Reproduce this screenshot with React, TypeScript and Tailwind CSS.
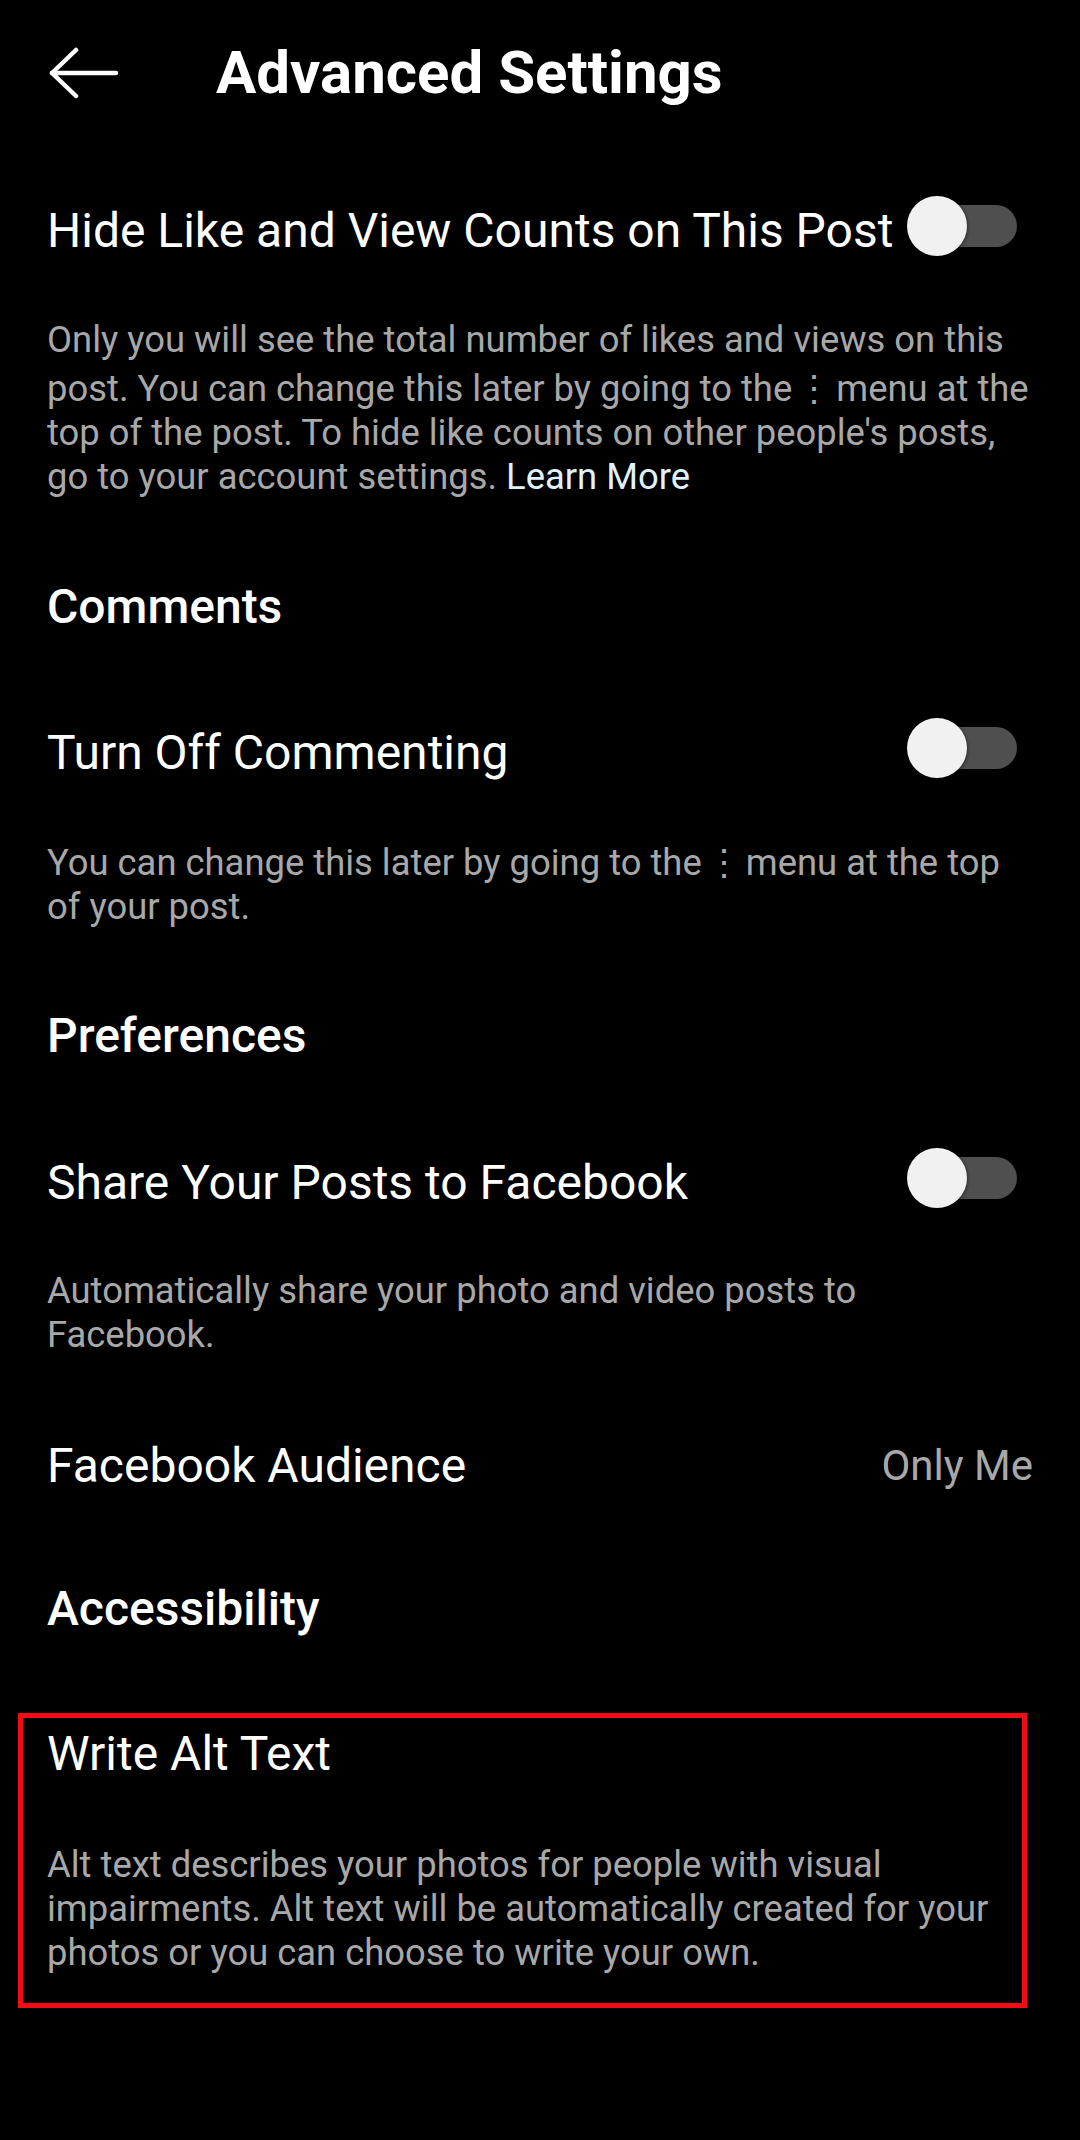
import React from "react";

const Toggle = () => (
  <div className="relative w-[110px] h-[60px] shrink-0 mr-[16px] -mt-[10px]">
    <div className="absolute right-0 top-[9px] h-[42px] w-[90px] rounded-full bg-[#4f4f4f]" />
    <div className="absolute left-0 top-0 h-[60px] w-[60px] rounded-full bg-[#f1f1f1] shadow-[0_1px_4px_rgba(0,0,0,0.6)]" />
  </div>
);

const Dots = () => (
  <span className="inline-flex justify-center w-[26px] pt-[5px] align-baseline">⋮</span>
);

export default function App() {
  return (
    <div className="w-[1080px] h-[2140px] bg-black overflow-hidden font-[Roboto,'Noto_Sans',sans-serif] text-white">
      {/* Header */}
      <div className="flex items-center h-[144px] pt-[2px]">
        <svg
          className="ml-[49px] shrink-0"
          width="70"
          height="56"
          viewBox="0 0 70 56"
          fill="none"
          stroke="white"
          strokeWidth="4.5"
          strokeLinecap="round"
          strokeLinejoin="round"
        >
          <path d="M3 28 H67" />
          <path d="M27 5 L3 28 L27 51" />
        </svg>
        <h1 className="ml-[97px] text-[60px] leading-[72px] font-bold">Advanced Settings</h1>
      </div>

      <div className="px-[47px]">
        {/* Hide like */}
        <div className="mt-[59px] h-[56px] flex items-center justify-between">
          <span className="text-[48px] leading-[56px] whitespace-nowrap">
            Hide Like and View Counts on This Post
          </span>
          <Toggle />
        </div>
        <p className="mt-[59px] text-[36.4px] leading-[44px] text-[#a8a8a8] whitespace-nowrap">
          Only you will see the total number of likes and views on this
          <br />
          post. You can change this later by going to the <Dots /> menu at the
          <br />
          top of the post. To hide like counts on other people's posts,
          <br />
          go to your account settings. <span className="text-[#e0f1ff]">Learn More</span>
        </p>

        {/* Comments */}
        <div className="mt-[80px] h-[56px] text-[48px] leading-[56px] font-medium">Comments</div>
        <div className="mt-[90px] h-[56px] flex items-center justify-between">
          <span className="text-[48px] leading-[56px] whitespace-nowrap">Turn Off Commenting</span>
          <Toggle />
        </div>
        <p className="mt-[55px] text-[36.4px] leading-[44px] text-[#a8a8a8] whitespace-nowrap">
          You can change this later by going to the <Dots /> menu at the top
          <br />
          of your post.
        </p>

        {/* Preferences */}
        <div className="mt-[79px] h-[56px] text-[48px] leading-[56px] font-medium">Preferences</div>
        <div className="mt-[91px] h-[56px] flex items-center justify-between">
          <span className="text-[48px] leading-[56px] whitespace-nowrap">Share Your Posts to Facebook</span>
          <Toggle />
        </div>
        <p className="mt-[58px] text-[36.4px] leading-[44px] text-[#a8a8a8] whitespace-nowrap">
          Automatically share your photo and video posts to
          <br />
          Facebook.
        </p>
        <div className="mt-[81px] h-[56px] flex items-center justify-between">
          <span className="text-[48px] leading-[56px] whitespace-nowrap">Facebook Audience</span>
          <span className="text-[42px] leading-[56px] text-[#a8a8a8]">Only Me</span>
        </div>

        {/* Accessibility */}
        <div className="mt-[87px] h-[56px] text-[48px] leading-[56px] font-medium">Accessibility</div>
        <div className="mt-[76px] -ml-[29px] w-[1009px] border-[5px] border-[#f20c18] pl-[24px] pt-[8px] pb-[28px]">
          <div className="h-[56px] text-[48px] leading-[56px] whitespace-nowrap">Write Alt Text</div>
          <p className="mt-[61px] text-[36.4px] leading-[44px] text-[#a8a8a8] whitespace-nowrap">
            Alt text describes your photos for people with visual
            <br />
            impairments. Alt text will be automatically created for your
            <br />
            photos or you can choose to write your own.
          </p>
        </div>
      </div>
    </div>
  );
}
